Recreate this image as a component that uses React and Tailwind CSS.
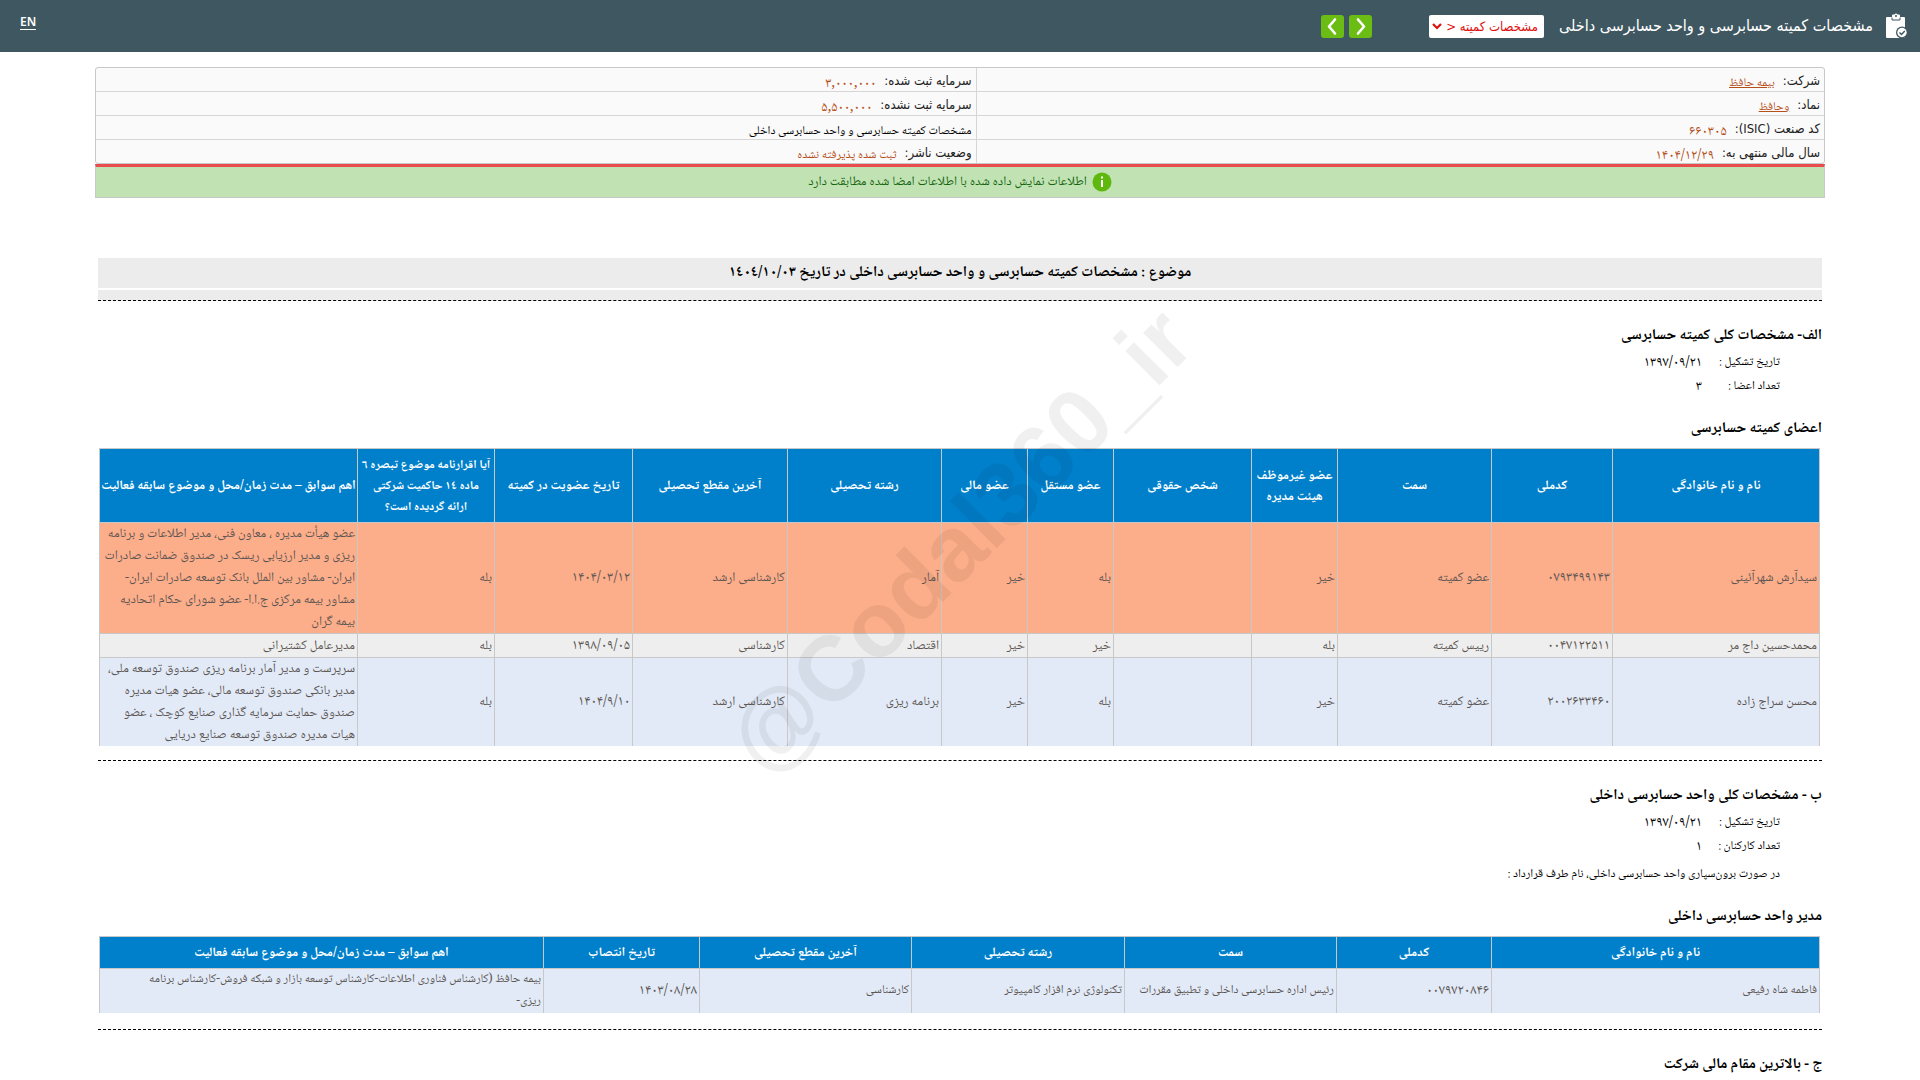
const naskh = "font-['Noto_Naskh_Arabic','DejaVu_Sans_Condensed',serif]";
const sans = "font-['DejaVu_Sans_Condensed','DejaVu_Sans',sans-serif]";

const memberHeaders = [
  "نام و نام خانوادگی",
  "کدملی",
  "سمت",
  "عضو غیرموظف\nهیئت مدیره",
  "شخص حقوقی",
  "عضو مستقل",
  "عضو مالی",
  "رشته تحصیلی",
  "آخرین مقطع تحصیلی",
  "تاریخ عضویت در کمیته",
  "آیا اقرارنامه موضوع تبصره ٦\nماده ١٤ حاکمیت شرکتی\nارائه گردیده است؟",
  "اهم سوابق – مدت زمان/محل و موضوع سابقه فعالیت",
];

const members = [
  {
    tone: "bg-[#fcad89]",
    cells: [
      "سیدآرش شهرآئینی",
      "۰۷۹۳۴۹۹۱۴۳",
      "عضو کمیته",
      "خیر",
      "",
      "بله",
      "خیر",
      "آمار",
      "کارشناسی ارشد",
      "۱۴۰۴/۰۳/۱۲",
      "بله",
      "عضو هیأت مدیره ، معاون فنی، مدیر اطلاعات و برنامه\nریزی و مدیر ارزیابی ریسک در صندوق ضمانت صادرات\nایران- مشاور بین الملل بانک توسعه صادرات ایران-\nمشاور بیمه مرکزی ج.ا.ا- عضو شورای حکام اتحادیه\nبیمه گران",
    ],
  },
  {
    tone: "bg-[#eeeeee]",
    cells: [
      "محمدحسین داج مر",
      "۰۰۴۷۱۲۲۵۱۱",
      "رییس کمیته",
      "بله",
      "",
      "خیر",
      "خیر",
      "اقتصاد",
      "کارشناسی",
      "۱۳۹۸/۰۹/۰۵",
      "بله",
      "مدیرعامل کشتیرانی",
    ],
  },
  {
    tone: "bg-[#e2eaf7]",
    cells: [
      "محسن سراج زاده",
      "۲۰۰۲۶۳۳۴۶۰",
      "عضو کمیته",
      "خیر",
      "",
      "بله",
      "خیر",
      "برنامه ریزی",
      "کارشناسی ارشد",
      "۱۴۰۴/۹/۱۰",
      "بله",
      "سرپرست و مدیر آمار برنامه ریزی صندوق توسعه ملی،\nمدیر بانکی صندوق توسعه مالی، عضو هیات مدیره\nصندوق حمایت سرمایه گذاری صنایع کوچک ، عضو\nهیات مدیره صندوق توسعه صنایع دریایی",
    ],
  },
];

const managerHeaders = [
  "نام و نام خانوادگی",
  "کدملی",
  "سمت",
  "رشته تحصیلی",
  "آخرین مقطع تحصیلی",
  "تاریخ انتصاب",
  "اهم سوابق – مدت زمان/محل و موضوع سابقه فعالیت",
];

const managers = [
  {
    tone: "bg-[#e2eaf7]",
    cells: [
      "فاطمه شاه رفیعی",
      "۰۰۷۹۷۲۰۸۴۶",
      "رئیس اداره حسابرسی داخلی و تطبیق مقررات",
      "تکنولوژی نرم افزار کامپیوتر",
      "کارشناسی",
      "۱۴۰۳/۰۸/۲۸",
      "بیمه حافظ (کارشناس فناوری اطلاعات-کارشناس توسعه بازار و شبکه فروش-کارشناس برنامه\nریزی-",
    ],
  },
];

const memberCols = ["w-[207px]", "w-[121px]", "w-[154px]", "w-[86px]", "w-[138px]", "w-[86px]", "w-[86px]", "w-[154px]", "w-[155px]", "w-[138px]", "w-[137px]", "w-[258px]"];
const managerCols = ["w-[328px]", "w-[155px]", "w-[212px]", "w-[213px]", "w-[212px]", "w-[156px]", "w-[444px]"];

function DataTable({ cols, headers, rows, textSize }) {
  return (
    <div className="pr-0.5 pl-[3px]">
      <table className="w-full table-fixed border-collapse border-x border-t border-[#c8c8c8]">
        <colgroup>
          {cols.map((c, i) => (
            <col key={i} className={c} />
          ))}
        </colgroup>
        <thead>
          <tr className="bg-[#007fca] text-white">
            {headers.map((h) => (
              <th
                key={h}
                className={`border-x border-b border-[#c8c8c8] pt-1.5 pb-1 text-center align-middle leading-[21px] font-bold whitespace-pre-line ${h.length > 50 ? "text-[12px]" : "text-[13px]"}`}
              >
                {h}
              </th>
            ))}
          </tr>
        </thead>
        <tbody>
          {rows.map((r, n) => (
            <tr key={n} className={`${r.tone} h-6 border-t border-[#c8c8c8] text-[#5c5654]`}>
              {r.cells.map((c, i) => (
                <td
                  key={i}
                  className={`border-x border-[#c8c8c8] px-0.5 text-right align-middle leading-[22px] whitespace-pre-line ${/^[۰-۹]/.test(c) ? "text-[14px]" : textSize}`}
                >
                  {c}
                </td>
              ))}
            </tr>
          ))}
        </tbody>
      </table>
    </div>
  );
}

function Info({ label, value, link }) {
  const size = /^[۰-۹]/.test(value) ? "text-[14px]" : "text-[12px]";
  return (
    <div className="flex h-6 items-center gap-2 border-t border-[#d6d6d6] px-1 pt-0.5 first:h-[23px] first:border-t-0">
      {label && <span className={`${sans} text-[13px] leading-4 text-[#222]`}>{label}</span>}
      {link ? (
        <a href="#" className="pt-1.5 text-[12px] leading-4 text-[#b5501b] underline">{value}</a>
      ) : (
        <span className={`pt-1.5 leading-4 ${size} ${label ? "text-[#b5501b]" : "text-black"}`}>{value}</span>
      )}
    </div>
  );
}

function Heading({ children }) {
  return <h2 className="text-[15px] leading-6 font-bold text-black">{children}</h2>;
}

function Fact({ label, value }) {
  return (
    <div className="flex h-6 items-center pr-[42px] text-black">
      <dt className="w-[78px] text-[12px] whitespace-nowrap">{label}</dt>
      <dd className="text-[14px]">{value}</dd>
    </div>
  );
}

function ClipboardIcon() {
  return (
    <svg viewBox="0 0 23 26" className="h-[26px] w-[23px]" aria-hidden="true">
      <path d="M2 4h5V2.500a1 1 0 0 1 1-1h1.500a1.700 1.700 0 0 1 3 0H14a1 1 0 0 1 1 1V4h4a1 1 0 0 1 1 1v20H2a1 1 0 0 1-1-1V5a1 1 0 0 1 1-1z" fill="#fff" />
      <path d="M7 4.500v2.500h8V4.500" fill="none" stroke="#3f5761" strokeWidth="1" />
      <circle cx="11" cy="3" r="1" fill="#3f5761" />
      <circle cx="17" cy="19.500" r="6" fill="#3f5761" />
      <circle cx="17" cy="19.500" r="4.700" fill="#fff" />
      <path d="M14.500 19.500l2 2 3.300-3.600" fill="none" stroke="#3f5761" strokeWidth="1.500" />
    </svg>
  );
}

function NavButton({ label, d }) {
  return (
    <button type="button" aria-label={label} className="flex size-[23px] items-center justify-center rounded-[3px] bg-[#6bbd13]">
      <svg viewBox="0 0 23 23" className="size-[23px]" fill="none" stroke="#fff" strokeWidth="2.600" strokeLinecap="round" strokeLinejoin="round" aria-hidden="true">
        <path d={d} />
      </svg>
    </button>
  );
}

export default function App() {
  return (
    <div dir="rtl" className={`relative bg-white ${naskh}`}>
      <header className={`flex h-[52px] items-center bg-[#3f5761] pr-3 pl-5 ${sans}`}>
        <ClipboardIcon />
        <h1 className="mr-3 text-[16px] leading-6 whitespace-nowrap text-white">مشخصات کمیته حسابرسی و واحد حسابرسی داخلی</h1>
        <div className="relative mr-[15px]">
          <select aria-label="بخش گزارش" className="block h-[23px] w-[115px] appearance-none rounded-[2px] bg-white pr-1.5 pl-4 text-[13px] leading-[23px] text-[#e01010]">
            <option>مشخصات کمیته &lt;</option>
          </select>
          <svg viewBox="0 0 10 7" className="pointer-events-none absolute top-2 left-[3px] h-[7px] w-[10px]" fill="none" stroke="#e01010" strokeWidth="2.200" aria-hidden="true">
            <path d="M1 1l4 4 4-4" />
          </svg>
        </div>
        <div className="mr-[57px] flex gap-[5px]">
          <NavButton label="قبلی" d="M9 4.500l6 7-6 7" />
          <NavButton label="بعدی" d="M14 4.500l-6 7 6 7" />
        </div>
        <a href="#" className="mr-auto mb-2 border-b border-white font-['Noto_Sans',sans-serif] text-[12px] leading-[14px] font-semibold text-white">EN</a>
      </header>

      <main className="px-[95px] pt-[15px]">
        <section className="flex rounded-[3px] border border-[#c8c8c8] bg-[#fafafa]">
          <div className="w-[49.1%] border-l border-[#d6d6d6]">
            <Info label="شرکت:" value="بیمه حافظ" link />
            <Info label="نماد:" value="وحافظ" link />
            <Info label="کد صنعت (ISIC):" value="۶۶۰۳۰۵" />
            <Info label="سال مالی منتهی به:" value="۱۴۰۴/۱۲/۲۹" />
          </div>
          <div className="flex-1">
            <Info label="سرمایه ثبت شده:" value="۳,۰۰۰,۰۰۰" />
            <Info label="سرمایه ثبت نشده:" value="۵,۵۰۰,۰۰۰" />
            <Info value="مشخصات کمیته حسابرسی و واحد حسابرسی داخلی" />
            <Info label="وضعیت ناشر:" value="ثبت شده پذیرفته نشده" />
          </div>
        </section>
        <div className="flex h-[34px] items-center justify-center gap-[5px] border border-t-[3px] border-[#c8c8c8] border-t-[#e84c4c] bg-[#c1e2b3]">
          <svg viewBox="0 0 20 20" className="size-5" aria-hidden="true">
            <circle cx="10" cy="10" r="9.500" fill="#5fb80d" />
            <path d="M10 8v7M10 4.500v2" stroke="#fff" strokeWidth="2" />
          </svg>
          <span className="text-[13px] leading-5 text-[#14650f]">اطلاعات نمایش داده شده با اطلاعات امضا شده مطابقت دارد</span>
        </div>

        <div className="px-[3px] pt-[60px]">
          <div className="h-[30px] bg-[#ececec] text-center text-[15px] leading-[30px] font-bold text-black">
            موضوع : مشخصات کمیته حسابرسی و واحد حسابرسی داخلی در تاریخ ١٤٠٤/١٠/٠٣
          </div>
          <div className="mt-0.5 h-[11px] border-b border-dashed border-black bg-[#ececec]" />

          <section className="border-b border-dashed border-black pt-[23px] pb-[14px]">
            <Heading>الف- مشخصات کلی کمیته حسابرسی</Heading>
            <dl className="pt-[3px]">
              <Fact label="تاریخ تشکیل :" value="۱۳۹۷/۰۹/۲۱" />
              <Fact label="تعداد اعضا :" value="۳" />
            </dl>
            <div className="pt-[18px] pb-[7px]">
              <Heading>اعضای کمیته حسابرسی</Heading>
            </div>
            <DataTable cols={memberCols} headers={memberHeaders} rows={members} textSize="text-[13px]" />
          </section>

          <section className="border-b border-dashed border-black pt-[23px] pb-4">
            <Heading>ب - مشخصات کلی واحد حسابرسی داخلی</Heading>
            <dl className="pt-[3px]">
              <Fact label="تاریخ تشکیل :" value="۱۳۹۷/۰۹/۲۱" />
              <Fact label="تعداد کارکنان :" value="۱" />
              <div className="pt-1">
                <Fact label="در صورت برون‌سپاری واحد حسابرسی داخلی، نام طرف قرارداد :" value="" />
              </div>
            </dl>
            <div className="pt-[18px] pb-[7px]">
              <Heading>مدیر واحد حسابرسی داخلی</Heading>
            </div>
            <DataTable cols={managerCols} headers={managerHeaders} rows={managers} textSize="text-[12px]" />
          </section>

          <section className="pt-[23px]">
            <Heading>ج - بالاترین مقام مالی شرکت</Heading>
          </section>
        </div>
      </main>

      <div className="pointer-events-none fixed inset-0 flex items-center justify-center overflow-hidden">
        <span dir="ltr" className="-rotate-45 font-['Liberation_Sans',sans-serif] text-[92px] leading-none font-bold whitespace-nowrap text-black/6">@Codal360_ir</span>
      </div>
    </div>
  );
}
